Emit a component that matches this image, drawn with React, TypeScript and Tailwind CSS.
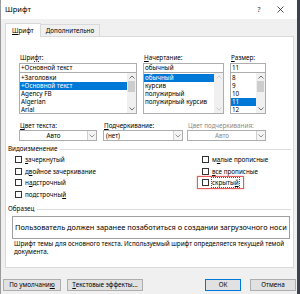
import React from 'react'

function Chevron({ up, color = '#606060' }: { up?: boolean; color?: string }) {
  return (
    <svg width="6" height="4" viewBox="0 0 6 4" className="block">
      <path d={up ? 'M0.5 3.5 L3 1 L5.5 3.5' : 'M0.5 0.5 L3 3 L5.5 0.5'} fill="none" stroke={color} strokeWidth="0.9" />
    </svg>
  )
}

function ScrollBar({ thumb, disabled }: { thumb?: boolean; disabled?: boolean }) {
  const c = disabled ? '#c8c8c8' : '#606060'
  return (
    <div className="flex flex-col w-[9px] h-full bg-[#f0f0f0] shrink-0">
      <div className="h-[8px] flex items-center justify-center">
        <Chevron up color={c} />
      </div>
      <div className="flex-1 px-[1px]">{thumb && <div className="h-[11px] bg-[#cdcdcd]" />}</div>
      <div className="h-[8px] flex items-center justify-center">
        <Chevron color={c} />
      </div>
    </div>
  )
}

function ListItem({ text, selected }: { text: string; selected?: boolean }) {
  return (
    <div className={`h-[8px] leading-[8px] pl-[1px] whitespace-nowrap ${selected ? 'bg-[#0078d7] text-white' : ''}`}>
      {text}
    </div>
  )
}

function Combo({ text, disabled, center }: { text: string; disabled?: boolean; center?: boolean }) {
  return (
    <div className="flex h-[11px] border border-[#adadad] bg-white">
      <div
        className={`flex-1 leading-[9px] px-[2px] ${center ? 'text-center' : ''} ${disabled ? 'text-[#8a8a8a]' : 'text-black'}`}
      >
        {text}
      </div>
      <div className="w-[9px] border-l border-[#cfcfcf] bg-[#f4f4f4] flex items-center justify-center">
        <Chevron color="#8a8a8a" />
      </div>
    </div>
  )
}

function Check({ children }: { children: React.ReactNode }) {
  return (
    <div className="flex items-center gap-[3px] h-[11.5px]">
      <div className="w-[7px] h-[7px] border border-[#333] bg-white shrink-0" />
      <span className="leading-[9px] whitespace-nowrap">{children}</span>
    </div>
  )
}

function Group({ title }: { title: string }) {
  return (
    <div className="flex items-center h-[8px] pl-[1px] pr-[2px] gap-[3px]">
      <span className="leading-[8px] whitespace-nowrap">{title}</span>
      <div className="flex-1 h-px bg-[#dcdcdc]" />
    </div>
  )
}

function Button({ children, primary, className = '' }: { children: React.ReactNode; primary?: boolean; className?: string }) {
  return (
    <div
      className={`h-[12px] flex items-center justify-center bg-[#e1e1e1] border ${primary ? 'border-[#0078d7]' : 'border-[#adadad]'} leading-[10px] whitespace-nowrap shrink-0 ${className}`}
    >
      {children}
    </div>
  )
}

export default function App() {
  return (
    <div className="w-[300px] h-[294px] flex bg-[#3b4250] overflow-hidden font-['Noto_Sans',sans-serif] text-[6.3px] text-black">
      <div className="w-[297px] h-full flex flex-col bg-[#f0f0f0] border-l border-[#9a9a9a] shrink-0">
        {/* title bar */}
        <div className="h-[19px] bg-white flex items-center pl-[4px] shrink-0">
          <span className="text-[7.5px] flex-1">Шрифт</span>
          <span className="text-[7.5px] text-[#333] w-[10px] text-center">?</span>
          <div className="w-[33px] flex items-center justify-center">
            <svg width="7" height="7" viewBox="0 0 7 7">
              <path d="M0.5 0.5 L6.5 6.5 M6.5 0.5 L0.5 6.5" stroke="#222" strokeWidth="0.8" />
            </svg>
          </div>
        </div>

        {/* tabs */}
        <div className="flex items-end h-[17px] pl-[4px] pt-[3px]">
          <div className="h-[14px] px-[6px] bg-white border border-b-0 border-[#d9d9d9] leading-[13px] relative top-[1px] z-10">
            <u>Ш</u>рифт
          </div>
          <div className="h-[12px] px-[5px] bg-[#f0f0f0] border border-l-0 border-b-0 border-[#d9d9d9] leading-[11px]">
            Дополнительно
          </div>
        </div>

        {/* panel */}
        <div className="ml-[4px] w-[289px] h-[232px] bg-white border border-[#d9d9d9] flex flex-col pt-[16px] shrink-0">
          {/* font lists */}
          <div className="flex pl-[13px] gap-[6px]">
            <div className="w-[118px] flex flex-col">
              <div className="h-[9px] leading-[9px] pl-[1px] mb-[1px]">Шри<u>ф</u>т:</div>
              <div className="h-[10px] border border-[#adadad] leading-[8px] px-[1px]">+Основной текст</div>
              <div className="h-[41px] border border-[#adadad] border-t-0 flex">
                <div className="flex-1 pt-[1px] overflow-hidden">
                  <ListItem text="+Заголовки" />
                  <ListItem text="+Основной текст" selected />
                  <ListItem text="Agency FB" />
                  <ListItem text="Algerian" />
                  <ListItem text="Arial" />
                </div>
                <ScrollBar thumb />
              </div>
            </div>
            <div className="w-[81px] flex flex-col">
              <div className="h-[9px] leading-[9px] pl-[1px] mb-[1px]"><u>Н</u>ачертание:</div>
              <div className="h-[10px] border border-[#adadad] leading-[8px] px-[1px]">обычный</div>
              <div className="h-[41px] border border-[#adadad] border-t-0 flex">
                <div className="flex-1 pt-[1px] overflow-hidden">
                  <ListItem text="обычный" selected />
                  <ListItem text="курсив" />
                  <ListItem text="полужирный" />
                  <ListItem text="полужирный курсив" />
                </div>
                <ScrollBar disabled />
              </div>
            </div>
            <div className="w-[36px] flex flex-col">
              <div className="h-[9px] leading-[9px] pl-[1px] mb-[1px]"><u>Р</u>азмер:</div>
              <div className="h-[10px] border border-[#adadad] leading-[8px] px-[1px]">11</div>
              <div className="h-[41px] border border-[#adadad] border-t-0 flex">
                <div className="flex-1 pt-[1px] overflow-hidden">
                  <ListItem text="8" />
                  <ListItem text="9" />
                  <ListItem text="10" />
                  <ListItem text="11" selected />
                  <ListItem text="12" />
                </div>
                <ScrollBar thumb />
              </div>
            </div>
          </div>

          {/* colours */}
          <div className="flex pl-[13px] mt-[8px]">
            <div className="w-[78px] flex flex-col">
              <div className="h-[8px] leading-[8px] pl-[1px]"><u>Ц</u>вет текста:</div>
              <Combo text="Авто" center />
            </div>
            <div className="w-[80px] ml-[6px] flex flex-col">
              <div className="h-[8px] leading-[8px] pl-[1px]"><u>П</u>одчеркивание:</div>
              <Combo text="(нет)" />
            </div>
            <div className="w-[79px] ml-[4px] flex flex-col">
              <div className="h-[8px] leading-[8px] pl-[1px] text-[#8a8a8a]">Цвет подчеркивания:</div>
              <Combo text="Авто" center disabled />
            </div>
          </div>

          {/* effects */}
          <div className="mt-[4px] pl-[1px]">
            <Group title="Видоизменение" />
          </div>
          <div className="grid grid-cols-[187px_1fr] pl-[9px] mt-[1px]">
            <div className="flex flex-col">
              <Check><u>з</u>ачеркнутый</Check>
              <Check>д<u>в</u>ойное зачеркивание</Check>
              <Check>н<u>а</u>дстрочный</Check>
              <Check>подстрочны<u>й</u></Check>
            </div>
            <div className="flex flex-col">
              <Check>м<u>а</u>лые прописные</Check>
              <Check><u>в</u>се прописные</Check>
              <div className="relative">
                <div className="absolute left-[-5px] top-[-1px] w-[47px] h-[13px] border border-[#e35d5d] shadow-[0_0_2px_rgba(227,93,93,0.5)]" />
                <Check>
                  <span className="outline outline-1 outline-dotted outline-[#555]">скрыты<u>й</u></span>
                </Check>
              </div>
            </div>
          </div>

          {/* sample */}
          <div className="mt-[5px] pl-[1px]">
            <Group title="Образец" />
          </div>
          <div className="ml-[6px] mt-[3px] w-[278px] h-[23px] border border-[#a0a0a0] flex items-center pl-[2px] overflow-hidden">
            <span className="text-[7.4px] whitespace-nowrap">Пользователь должен заранее позаботиться о создании загрузочного носи</span>
          </div>
          <div className="ml-[8px] mt-[1px] leading-[8px]">
            Шрифт темы для основного текста. Используемый шрифт определяется текущей темой документа.
          </div>
        </div>

        {/* buttons */}
        <div className="flex pl-[2px] mt-[11px]">
          <Button className="w-[58px]">По умолчани<u>ю</u></Button>
          <Button className="w-[76px] ml-[6px]"><u>Т</u>екстовые эффекты...</Button>
          <Button className="w-[36px] ml-[62px]" primary>ОК</Button>
          <Button className="w-[46px] ml-[9px]">Отмена</Button>
        </div>
      </div>
    </div>
  )
}
